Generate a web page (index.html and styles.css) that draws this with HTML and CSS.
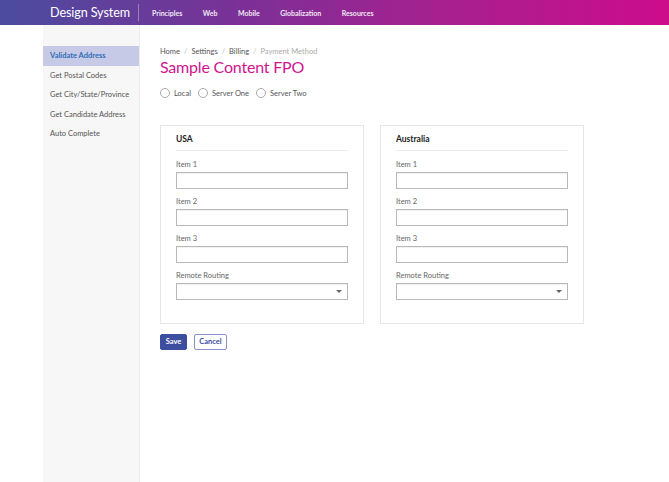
FILE: index.html
```html
<!DOCTYPE html>
<html lang="en">
<head>
<meta charset="utf-8">
<title>Design System</title>
<link rel="stylesheet" href="styles.css">
</head>
<body>
<header class="topbar">
  <div class="brand">Design System</div>
  <nav class="topnav">
    <a>Principles</a>
    <a>Web</a>
    <a>Mobile</a>
    <a>Globalization</a>
    <a>Resources</a>
  </nav>
</header>
<div class="layout">
  <aside class="sidebar">
    <a class="side-item active">Validate Address</a>
    <a class="side-item">Get Postal Codes</a>
    <a class="side-item">Get City/State/Province</a>
    <a class="side-item">Get Candidate Address</a>
    <a class="side-item">Auto Complete</a>
  </aside>
  <main class="content">
    <div class="crumbs">
      <span>Home</span><span class="sep">/</span><span>Settings</span><span class="sep">/</span><span>Billing</span><span class="sep">/</span><span class="current">Payment Method</span>
    </div>
    <h1 class="title">Sample Content FPO</h1>
    <div class="radios">
      <label class="radio"><span class="circle"></span>Local</label>
      <label class="radio"><span class="circle"></span>Server One</label>
      <label class="radio"><span class="circle"></span>Server Two</label>
    </div>
    <div class="cards">
      <section class="card">
        <h2 class="card-title">USA</h2>
        <div class="field"><div class="label">Item 1</div><div class="input"></div></div>
        <div class="field"><div class="label">Item 2</div><div class="input"></div></div>
        <div class="field"><div class="label">Item 3</div><div class="input"></div></div>
        <div class="field"><div class="label">Remote Routing</div><div class="input select"><span class="caret"></span></div></div>
      </section>
      <section class="card">
        <h2 class="card-title">Australia</h2>
        <div class="field"><div class="label">Item 1</div><div class="input"></div></div>
        <div class="field"><div class="label">Item 2</div><div class="input"></div></div>
        <div class="field"><div class="label">Item 3</div><div class="input"></div></div>
        <div class="field"><div class="label">Remote Routing</div><div class="input select"><span class="caret"></span></div></div>
      </section>
    </div>
    <div class="actions">
      <button class="btn primary">Save</button>
      <button class="btn secondary">Cancel</button>
    </div>
  </main>
</div>
</body>
</html>
```
FILE: styles.css
```css
* { box-sizing: border-box; }
html, body { margin: 0; padding: 0; }
body {
  font-family: "Lato", "Open Sans", sans-serif;
  background: #fff;
  color: #444;
}
.topbar {
  height: 25px;
  display: flex;
  align-items: center;
  padding-left: 50px;
  background: linear-gradient(90deg, #4a4c9f 0%, #7a3197 35%, #a5208f 65%, #cc0c8b 100%);
  color: #fff;
}
.brand {
  font-size: 12.6px;
  letter-spacing: -0.1px;
  white-space: nowrap;
  width: 89px;
  border-right: 1px solid rgba(255,255,255,0.35);
  line-height: 17px;
}
.topnav {
  display: flex;
  gap: 20.5px;
  padding-left: 13px;
}
.topnav a {
  font-size: 7px;
  font-weight: 700;
  color: #f2e8f4;
  white-space: nowrap;
}
.layout {
  display: flex;
  padding-left: 43px;
  min-height: calc(100vh - 25px);
}
.sidebar {
  width: 97px;
  background: #f7f7f7;
  border-right: 1px solid #ececec;
  padding-top: 21px;
  display: flex;
  flex-direction: column;
}
.side-item {
  height: 19.5px;
  line-height: 19.5px;
  padding-left: 7px;
  font-size: 7.5px;
  color: #555;
  white-space: nowrap;
}
.side-item.active {
  background: #c6cae6;
  color: #2f6db8;
  font-weight: 700;
}
.content {
  padding: 22px 0 0 20px;
  flex: 1;
}
.crumbs {
  font-size: 7.5px;
  line-height: 10px;
  color: #555;
}
.crumbs .sep { color: #bbb; margin: 0 4px; }
.crumbs .current { color: #aaa; }
.title {
  margin: 0;
  font-size: 16px;
  letter-spacing: -0.2px;
  font-weight: 400;
  line-height: 20px;
  color: #d1148e;
}
.radios {
  display: flex;
  gap: 7px;
  margin-top: 11px;
  height: 10px;
  align-items: center;
}
.radio {
  display: flex;
  align-items: center;
  font-size: 7.5px;
  color: #555;
}
.circle {
  width: 10px;
  height: 10px;
  border-radius: 50%;
  border: 1px solid #aaa;
  background: #fff;
  margin-right: 4px;
}
.cards {
  display: flex;
  gap: 16px;
  margin-top: 27px;
}
.card {
  width: 204px;
  height: 199px;
  border: 1px solid #e6e6e6;
  padding: 0 15px;
}
.card-title {
  margin: 0;
  font-size: 8.5px;
  font-weight: 700;
  color: #222;
  line-height: 10px;
  padding: 8px 0 6px;
  border-bottom: 1px solid #ececec;
}
.field { margin-top: 9px; }
.field + .field { margin-top: 8px; }
.label {
  font-size: 7.5px;
  color: #666;
  line-height: 10px;
  margin-bottom: 2px;
}
.input {
  height: 17px;
  border: 1px solid #b8b8b8;
  box-shadow: inset 0 1px 1px rgba(0,0,0,0.06);
  background: #fff;
  position: relative;
}
.caret {
  position: absolute;
  right: 5px;
  top: 6px;
  width: 0;
  height: 0;
  border-left: 3px solid transparent;
  border-right: 3px solid transparent;
  border-top: 3px solid #666;
}
.actions {
  display: flex;
  gap: 7px;
  margin-top: 10px;
}
.btn {
  height: 16px;
  padding: 0;
  font-family: inherit;
  font-size: 7.5px;
  font-weight: 700;
  border-radius: 2px;
  line-height: 14px;
}
.btn.primary {
  background: #3d4d9f;
  border: 1px solid #3d4d9f;
  color: #fff;
  width: 27px;
}
.btn.secondary {
  background: #fff;
  border: 1px solid #8a93c8;
  color: #3d4d9f;
  width: 33px;
}
```
